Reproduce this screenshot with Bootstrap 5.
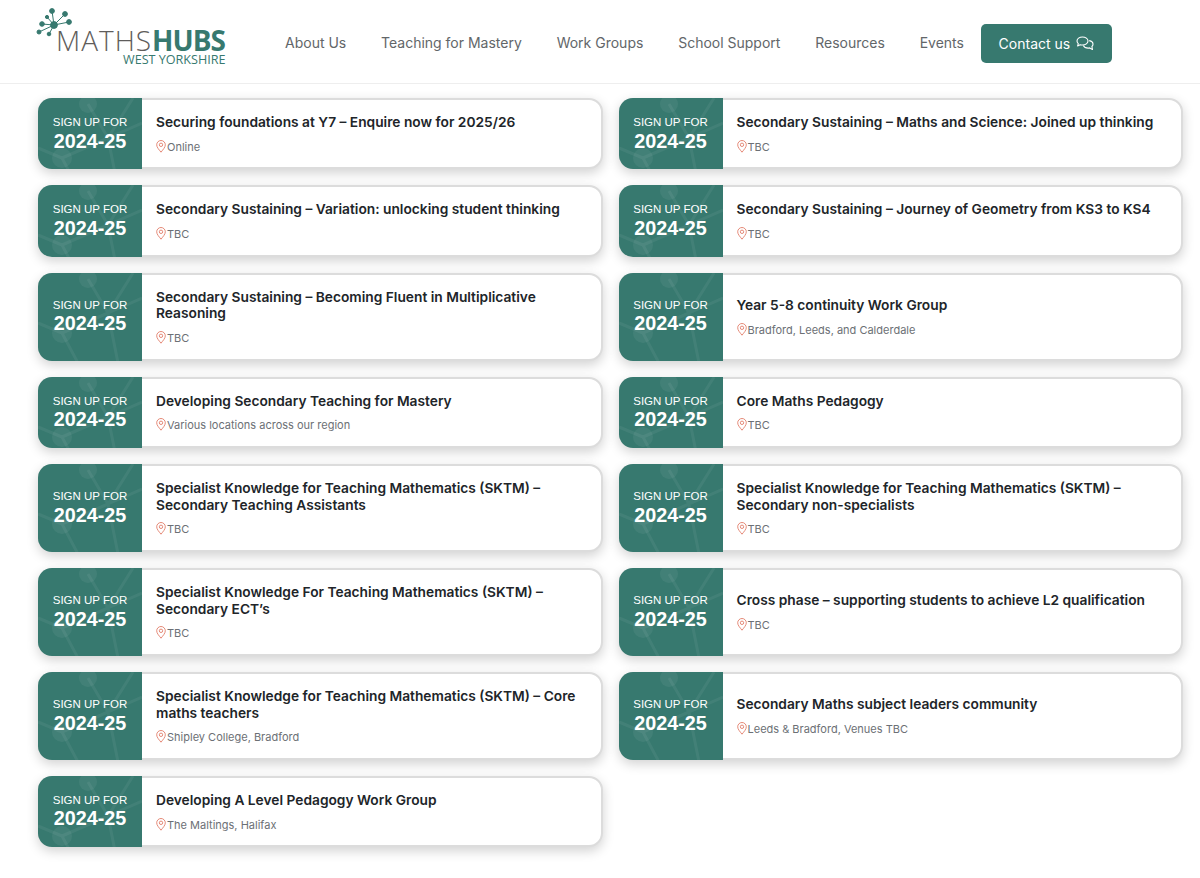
<!DOCTYPE html>
<html lang="en">
<head>
    <meta charset="UTF-8">
    <meta name="viewport" content="width=device-width, initial-scale=1.0">
    <title>Maths Hubs West Yorkshire</title>
    <link href="https://cdn.jsdelivr.net/npm/bootstrap@5.3.0/dist/css/bootstrap.min.css" rel="stylesheet">
    <style>
        body { font-family: Inter, "Liberation Sans", sans-serif; color: #212529; background: #fff; }
        .site-header { height: 84px; border-bottom: 1px solid #eee; padding: 3px 0 0 36px; }
        .logo { width: 192px; height: 84px; position: relative; margin-top: -3px; flex-shrink: 0; }
        .logo svg { position: absolute; left: 0; top: 0; }
        .logo-main { position: absolute; left: 20px; top: 26px; font-size: 28px; line-height: 28px; color: #5f5d5b; font-weight: 300; font-family: "Open Sans", sans-serif; white-space: nowrap; letter-spacing: 1px; }
        .logo-main b { color: #37796f; font-weight: 700; letter-spacing: -1px; }
        .logo-sub { position: absolute; left: 87px; top: 54px; font-size: 12.6px; line-height: 12px; color: #37796f; font-family: "Open Sans", sans-serif; white-space: nowrap; }
        .main-nav { gap: 34.8px; margin-left: 57px; margin-bottom: 1px; }
        .main-nav .nav-link { color: #626669; font-size: 14px; padding: 0; }
        .btn-contact { background: #37796f; color: #fff; font-size: 14px; font-weight: 400; width: 131px; height: 39px; border-radius: 5px; margin-left: 17px; border: 0; gap: 6px; }
        .btn-contact:hover { background: #2f6a62; color: #fff; }
        .course-list { padding: 14px 17px 30px 38px; }
        .course-card { border: 2px solid #dcdcdc; border-radius: 14px; box-shadow: 0 4px 12px rgba(0,0,0,.18); background: #fff; height: 100%; }
        .course-date { width: 104px; margin: -2px 0 -2px -2px; padding-top: 1px; border-radius: 14px 0 0 14px; background: #37796f; color: #fff; font-family: "Liberation Sans", sans-serif; line-height: 1; position: relative; overflow: hidden; }
        .course-date svg { position: absolute; left: 0; top: 0; }
        .course-date span { position: relative; }
        .course-date .top { font-size: 11.5px; margin-bottom: 3px; }
        .course-date .year { font-size: 19.8px; font-weight: 700; }
        .course-body { padding: 14px 14px 13px; }
        .course-body h3 { font-size: 13.75px; line-height: 16.7px; font-weight: 600; margin: 0 0 9px; color: #212529; }
        .course-loc { font-size: 11px; line-height: 14.6px; color: #6c7075; }
        .course-loc svg { margin-right: 1px; vertical-align: -2px; }
    </style>
</head>
<body>
    <header class="site-header d-flex align-items-center">
        <a href="#" class="logo d-block text-decoration-none">
            <svg width="46" height="44" viewBox="0 0 46 44" fill="#37796f" stroke="#37796f" stroke-width="1">
                <path d="M18 25 L16 11 M18 25 L29 14 M18 25 L33 22 M18 25 L6 24 M18 25 L3 32 M18 25 L13 34 M18 25 L11 17" fill="none"/>
                <circle cx="18" cy="25" r="3.4"/><circle cx="16" cy="11" r="2.4"/><circle cx="29" cy="14" r="2.4"/><circle cx="33" cy="22" r="2.4"/>
                <circle cx="6" cy="24" r="2.3"/><circle cx="3" cy="32" r="2"/><circle cx="13" cy="34" r="1.8"/><circle cx="11" cy="17" r="1.6"/>
            </svg>
            <span class="logo-main">MATHS<b>HUBS</b></span>
            <span class="logo-sub">WEST YORKSHIRE</span>
        </a>
        <nav class="main-nav nav align-items-center flex-nowrap">
            <a class="nav-link" href="#">About Us</a>
            <a class="nav-link" href="#">Teaching for Mastery</a>
            <a class="nav-link" href="#">Work Groups</a>
            <a class="nav-link" href="#">School Support</a>
            <a class="nav-link" href="#">Resources</a>
            <a class="nav-link" href="#">Events</a>
        </nav>
        <a href="#" class="btn btn-contact d-flex align-items-center justify-content-center p-0">Contact us
            <svg width="18" height="15" viewBox="0 0 18 15" fill="none" stroke="#fff" stroke-width="1.1" stroke-linejoin="round">
                <path d="M6.5 1C3.4 1 1 2.8 1 5c0 1 .5 1.900 1.300 2.600L1.600 10l2.600-1.300c.7.2 1.500.3 2.300.3 3 0 5.500-1.800 5.500-4S9.500 1 6.500 1z"/>
                <path d="M13.200 4.600C15.400 5 17 6.400 17 8.200c0 .9-.4 1.700-1.100 2.300l.6 3-2.800-1.600c-.5.1-1 .2-1.600.2-2.200 0-4-1-4.800-2.600"/>
            </svg>
        </a>
    </header>

    <main class="course-list">
        <div class="row g-3" id="cursos"></div>
    </main>

    <script src="https://cdn.jsdelivr.net/npm/bootstrap@5.3.0/dist/js/bootstrap.bundle.min.js"></script>
    <script>
        const cursos = [
            ['Securing foundations at Y7 – Enquire now for 2025/26', 'Online'],
            ['Secondary Sustaining – Maths and Science: Joined up thinking', 'TBC'],
            ['Secondary Sustaining – Variation: unlocking student thinking', 'TBC'],
            ['Secondary Sustaining – Journey of Geometry from KS3 to KS4', 'TBC'],
            ['Secondary Sustaining – Becoming Fluent in Multiplicative Reasoning', 'TBC'],
            ['Year 5-8 continuity Work Group', 'Bradford, Leeds, and Calderdale'],
            ['Developing Secondary Teaching for Mastery', 'Various locations across our region'],
            ['Core Maths Pedagogy', 'TBC'],
            ['Specialist Knowledge for Teaching Mathematics (SKTM) – Secondary Teaching Assistants', 'TBC'],
            ['Specialist Knowledge for Teaching Mathematics (SKTM) – Secondary non-specialists', 'TBC'],
            ['Specialist Knowledge For Teaching Mathematics (SKTM) – Secondary ECT’s', 'TBC'],
            ['Cross phase – supporting students to achieve L2 qualification', 'TBC'],
            ['Specialist Knowledge for Teaching Mathematics (SKTM) – Core maths teachers', 'Shipley College, Bradford'],
            ['Secondary Maths subject leaders community', 'Leeds & Bradford, Venues TBC'],
            ['Developing A Level Pedagogy Work Group', 'The Maltings, Halifax']
        ];

        const pin = `<svg width="10" height="13" viewBox="0 0 10 13" fill="none" stroke="#e58a78" stroke-width="1"><path d="M5 12.200C3 9.600 .7 7.300 .7 4.800a4.300 4.300 0 0 1 8.600 0C9.300 7.300 7 9.600 5 12.200z"/><circle cx="5" cy="4.800" r="1.700"/></svg>`;
        const fondo = `<svg width="104" height="88" fill="#fff" fill-opacity=".06" stroke="#fff" stroke-opacity=".06" stroke-width="3"><path fill="none" d="M70 40 L95 0 M70 40 L104 25 M70 40 L80 90 M70 40 L24 60 M70 40 L50 6 M24 60 L0 50 M24 60 L40 90"/><circle cx="50" cy="6" r="9" stroke="none"/><circle cx="24" cy="60" r="10" stroke="none"/></svg>`;

        document.getElementById('cursos').innerHTML = cursos.map(c => `
            <div class="col-6">
                <a href="#" class="course-card d-flex text-decoration-none">
                    <div class="course-date d-flex flex-column align-items-center justify-content-center flex-shrink-0">
                        ${fondo}
                        <span class="top">SIGN UP FOR</span>
                        <span class="year">2024-25</span>
                    </div>
                    <div class="course-body d-flex flex-column justify-content-center">
                        <h3>${c[0]}</h3>
                        <div class="course-loc">${pin}${c[1].replace('&', '&amp;')}</div>
                    </div>
                </a>
            </div>`).join('');
    </script>
</body>
</html>
